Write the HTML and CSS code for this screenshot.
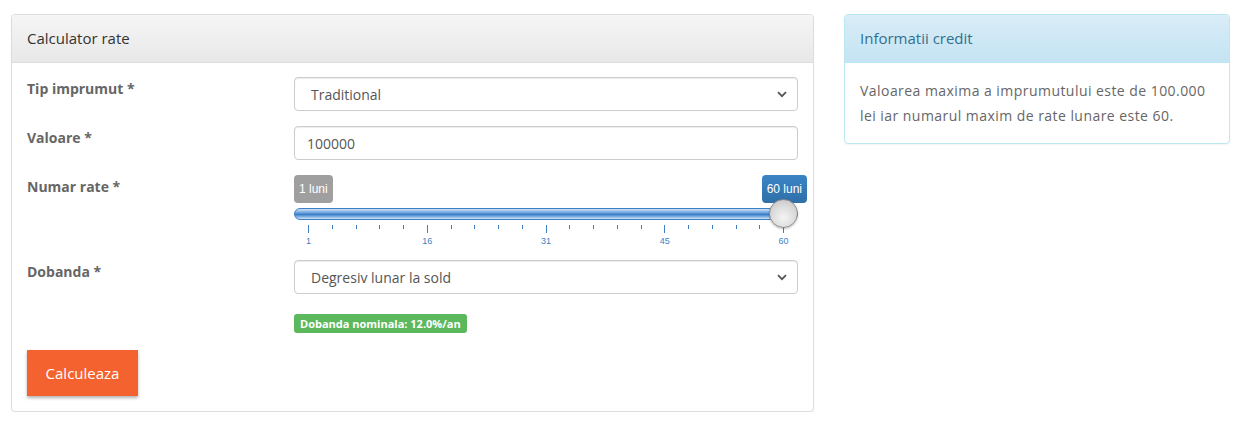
FILE: index.html
```html
<!DOCTYPE html>
<html lang="ro">
<head>
    <meta charset="UTF-8">
    <meta name="viewport" content="width=device-width, initial-scale=1.0">
    <title>Calculator rate</title>
    <link rel="stylesheet" href="styles.css">
</head>
<body>
    <div class="page">
        <!-- Calculator -->
        <div class="panel panel-default">
            <div class="panel-heading">Calculator rate</div>
            <div class="panel-body">
                <form class="calc-form">
                    <div class="form-group">
                        <label class="control-label">Tip imprumut *</label>
                        <div class="select-wrap">
                            <select class="form-control">
                                <option>Traditional</option>
                            </select>
                            <svg class="select-arrow" width="10" height="7" viewBox="0 0 10 7"><path d="M1 1.2 L5 5.2 L9 1.2" fill="none" stroke="#555" stroke-width="1.8"/></svg>
                        </div>
                    </div>

                    <div class="form-group">
                        <label class="control-label">Valoare *</label>
                        <input class="form-control input-text" type="text" value="100000">
                    </div>

                    <div class="form-group slider-group">
                        <label class="control-label">Numar rate *</label>
                        <div class="slider">
                            <div class="slider-tooltips">
                                <span class="slider-tooltip tooltip-min">1 luni</span>
                                <span class="slider-tooltip tooltip-max">60 luni</span>
                            </div>
                            <div class="slider-track">
                                <div class="slider-handle"></div>
                            </div>
                            <div class="slider-ticks">
                                <div class="tick major"><i></i><span>1</span></div>
                                <div class="tick"><i></i></div>
                                <div class="tick"><i></i></div>
                                <div class="tick"><i></i></div>
                                <div class="tick"><i></i></div>
                                <div class="tick major"><i></i><span>16</span></div>
                                <div class="tick"><i></i></div>
                                <div class="tick"><i></i></div>
                                <div class="tick"><i></i></div>
                                <div class="tick"><i></i></div>
                                <div class="tick major"><i></i><span>31</span></div>
                                <div class="tick"><i></i></div>
                                <div class="tick"><i></i></div>
                                <div class="tick"><i></i></div>
                                <div class="tick"><i></i></div>
                                <div class="tick major"><i></i><span>45</span></div>
                                <div class="tick"><i></i></div>
                                <div class="tick"><i></i></div>
                                <div class="tick"><i></i></div>
                                <div class="tick"><i></i></div>
                                <div class="tick major"><i></i><span>60</span></div>
                            </div>
                        </div>
                    </div>

                    <div class="form-group">
                        <label class="control-label">Dobanda *</label>
                        <div class="select-wrap">
                            <select class="form-control">
                                <option>Degresiv lunar la sold</option>
                            </select>
                            <svg class="select-arrow" width="10" height="7" viewBox="0 0 10 7"><path d="M1 1.2 L5 5.2 L9 1.2" fill="none" stroke="#555" stroke-width="1.8"/></svg>
                        </div>
                    </div>

                    <div class="form-group badge-row">
                        <span></span>
                        <div class="badge-cell"><span class="label label-success">Dobanda nominala: 12.0%/an</span></div>
                    </div>

                    <button type="button" class="btn-calc">Calculeaza</button>
                </form>
            </div>
        </div>

        <!-- Info -->
        <div class="panel panel-info">
            <div class="panel-heading">Informatii credit</div>
            <div class="panel-body info-text">
                Valoarea maxima a imprumutului este de 100.000 lei iar numarul maxim de rate lunare este 60.
            </div>
        </div>
    </div>
</body>
</html>
```

FILE: styles.css
```css
/* General */
body {
    margin: 0;
    font-family: 'Open Sans', 'Noto Sans', sans-serif;
    font-size: 14px;
    line-height: 1.42857;
    color: #555;
    background: #fff;
}

.page {
    display: grid;
    grid-template-columns: 803px 386px;
    column-gap: 30px;
    align-items: start;
    padding: 14px 0 0 11px;
}

/* Panels */
.panel {
    border: 1px solid #ddd;
    border-radius: 4px;
    box-shadow: 0 1px 2px rgba(0, 0, 0, 0.05);
    background: #fff;
}

.panel-heading {
    padding: 13px 15px 14px;
    font-size: 15px;
    line-height: 20px;
    border-bottom: 1px solid #ddd;
    border-radius: 3px 3px 0 0;
}

.panel-default .panel-heading {
    color: #333;
    background-image: linear-gradient(to bottom, #f5f5f5 0%, #e8e8e8 100%);
}

.panel-info {
    border-color: #bce8f1;
}

.panel-info .panel-heading {
    color: #31708f;
    border-bottom-color: #bce8f1;
    background-image: linear-gradient(to bottom, #d9edf7 0%, #c4e3f3 100%);
}

.panel-body {
    padding: 14px 15px 15px;
}

.info-text {
    padding: 15px;
    line-height: 25px;
    letter-spacing: 0.45px;
    color: #666;
}

/* Form */
.form-group {
    display: grid;
    grid-template-columns: 267px 1fr;
    margin-bottom: 15px;
}

.control-label {
    padding-top: 2px;
    font-weight: 700;
    color: #666;
}

.form-control {
    display: block;
    width: 100%;
    height: 34px;
    box-sizing: border-box;
    padding: 6px 12px;
    font-family: inherit;
    font-size: 14px;
    color: #555;
    background: #fff;
    border: 1px solid #ccc;
    border-radius: 4px;
    box-shadow: inset 0 1px 1px rgba(0, 0, 0, 0.075);
}

.input-text {
    padding-left: 12px;
}

.select-wrap {
    position: relative;
}

.select-wrap select {
    appearance: none;
    -webkit-appearance: none;
    padding-left: 16px;
}

.select-arrow {
    position: absolute;
    right: 11px;
    top: 14px;
    pointer-events: none;
}

/* Slider */
.slider-group {
    margin-bottom: 14px;
}

.slider-tooltips {
    display: flex;
    justify-content: space-between;
    height: 28px;
}

.slider-tooltip {
    padding: 0 5px;
    font-family: 'Liberation Sans', Arial, sans-serif;
    font-size: 12px;
    line-height: 28px;
    color: #fff;
    border-radius: 4px;
}

.tooltip-min {
    background: #9f9f9f;
}

.tooltip-max {
    margin-right: -9px;
    background: #337ab7;
    background-image: linear-gradient(to bottom, #3a84c4 0%, #2f6fa8 100%);
}

.slider-track {
    position: relative;
    height: 12px;
    margin-top: 5px;
    box-sizing: border-box;
    border: 1px solid #3b7fc6;
    border-radius: 6px;
    background-image: linear-gradient(to bottom, #d3e4f6 0%, #6fa6de 35%, #3c7fc8 55%, #9cc2ea 85%, #d6e6f7 100%);
}

.slider-handle {
    position: absolute;
    right: -1px;
    top: -10px;
    width: 29px;
    height: 29px;
    box-sizing: border-box;
    border: 1px solid #8c8c8c;
    border-radius: 50%;
    background-image: radial-gradient(circle at 50% 65%, #f4f4f4 0%, #dadada 55%, #bdbdbd 100%);
    box-shadow: 0 1px 2px rgba(0, 0, 0, 0.25);
}

.slider-ticks {
    display: flex;
    justify-content: space-between;
    margin: 5px 14px 0;
}

.tick {
    display: flex;
    flex-direction: column;
    align-items: center;
    width: 1px;
}

.tick i {
    display: block;
    width: 1px;
    height: 4px;
    background: #3b7fc6;
}

.tick.major i {
    height: 8px;
}

.tick span {
    margin-top: 3px;
    font-family: 'Liberation Sans', Arial, sans-serif;
    font-size: 9px;
    line-height: 10px;
    color: #3b7fc6;
    white-space: nowrap;
}

/* Badge */
.badge-row {
    padding-top: 5px;
    margin-bottom: 17px;
}

.badge-cell {
    display: flex;
}

.label {
    display: inline-block;
    padding: 0 6px;
    font-size: 11px;
    font-weight: 700;
    line-height: 19px;
    color: #fff;
    border-radius: 3px;
}

.label-success {
    background: #5cb85c;
}

/* Button */
.btn-calc {
    display: block;
    width: 111px;
    height: 46px;
    padding: 0;
    font-family: inherit;
    font-size: 15px;
    color: #fff;
    background: #f4632f;
    border: none;
    border-radius: 0;
    box-shadow: 0 2px 3px rgba(0, 0, 0, 0.3);
    cursor: pointer;
}
```
